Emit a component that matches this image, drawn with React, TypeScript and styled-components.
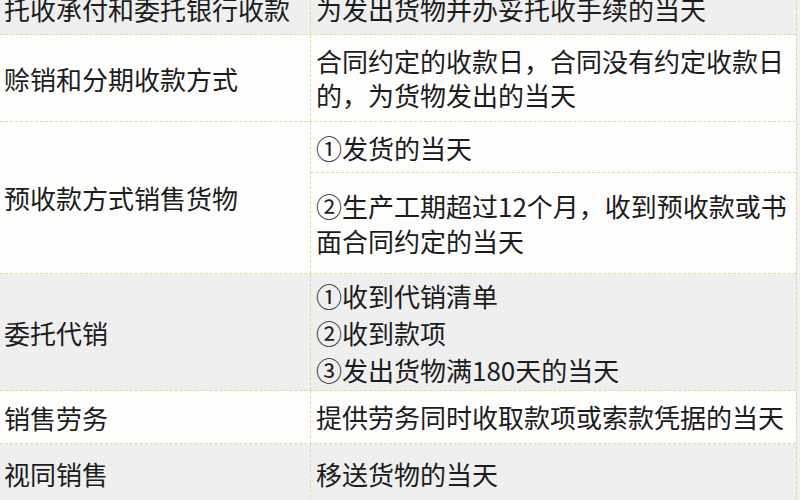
import React from "react";
import styled, { createGlobalStyle } from "styled-components";

const GlobalStyle = createGlobalStyle`
    html, body {
        margin: 0;
        padding: 0;
        width: 800px;
        height: 500px;
        overflow: hidden;
        background-color: #f0f0f0;
    }
`;

const Table = styled.div`
    width: 796px;
    margin-top: -17px;
    border-right: 1px dashed #e2d99a;
    font-family: "Noto Sans CJK SC", "Noto Sans", sans-serif;
    font-size: 26px;
    color: #1c1c1c;
`;

const Row = styled.div<{ $gray?: boolean; $h: number }>`
    display: grid;
    grid-template-columns: 311px 1fr;
    min-height: ${(p) => p.$h}px;
    background-color: ${(p) => (p.$gray ? "#efefef" : "#fdfdfc")};
    border-bottom: 1px dashed #e2d99a;
    box-sizing: border-box;
`;

const Label = styled.div`
    display: flex;
    align-items: center;
    padding-left: 4px;
    border-right: 1px dashed #e2d99a;
    white-space: nowrap;
`;

const Value = styled.div<{ $lh?: number }>`
    display: flex;
    flex-direction: column;
    justify-content: center;
    padding: 0 4px 0 5px;
    line-height: ${(p) => p.$lh ?? 34}px;
    white-space: nowrap;
`;

const Stack = styled.div`
    display: flex;
    flex-direction: column;
`;

const Sub = styled.div<{ $h: number; $lh?: number; $last?: boolean }>`
    display: flex;
    flex-direction: column;
    justify-content: center;
    min-height: ${(p) => p.$h}px;
    padding: 0 4px 0 5px;
    line-height: ${(p) => p.$lh ?? 35}px;
    white-space: nowrap;
    border-bottom: ${(p) => (p.$last ? "none" : "1px dashed #e2d99a")};
    box-sizing: border-box;
`;

const App = () => {
    return (
        <>
            <GlobalStyle />
            <Table>
                <Row $gray $h={52}>
                    <Label>托收承付和委托银行收款</Label>
                    <Value>为发出货物并办妥托收手续的当天</Value>
                </Row>
                <Row $h={87}>
                    <Label>赊销和分期收款方式</Label>
                    <Value $lh={34}>
                        <span>合同约定的收款日，合同没有约定收款日</span>
                        <span>的，为货物发出的当天</span>
                    </Value>
                </Row>
                <Row $h={151}>
                    <Label>预收款方式销售货物</Label>
                    <Stack>
                        <Sub $h={51}>①发货的当天</Sub>
                        <Sub $h={100} $last>
                            <span>②生产工期超过12个月，收到预收款或书</span>
                            <span>面合同约定的当天</span>
                        </Sub>
                    </Stack>
                </Row>
                <Row $gray $h={117}>
                    <Label>委托代销</Label>
                    <Value $lh={37}>
                        <span>①收到代销清单</span>
                        <span>②收到款项</span>
                        <span>③发出货物满180天的当天</span>
                    </Value>
                </Row>
                <Row $h={53}>
                    <Label>销售劳务</Label>
                    <Value>提供劳务同时收取款项或索款凭据的当天</Value>
                </Row>
                <Row $gray $h={60}>
                    <Label>视同销售</Label>
                    <Value>移送货物的当天</Value>
                </Row>
            </Table>
        </>
    );
};

export default App;
